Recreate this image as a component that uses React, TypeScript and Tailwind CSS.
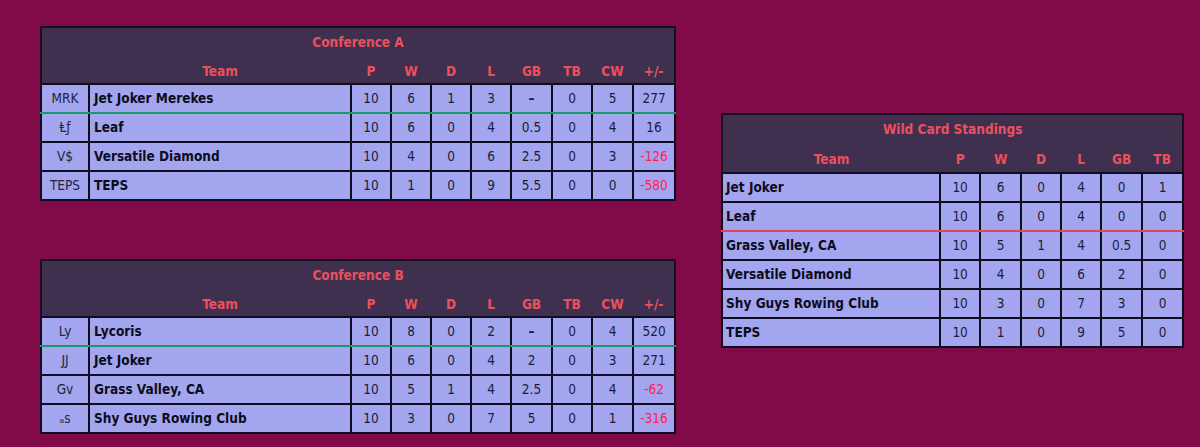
import React from 'react';

type Row = {
  code?: string;
  team: string;
  cells: string[];
};

const confA: Row[] = [
  { code: 'MRK', team: 'Jet Joker Merekes', cells: ['10', '6', '1', '3', '-', '0', '5', '277'] },
  { code: 'Ⱡƒ', team: 'Leaf', cells: ['10', '6', '0', '4', '0.5', '0', '4', '16'] },
  { code: 'V$', team: 'Versatile Diamond', cells: ['10', '4', '0', '6', '2.5', '0', '3', '-126'] },
  { code: 'TEPS', team: 'TEPS', cells: ['10', '1', '0', '9', '5.5', '0', '0', '-580'] },
];

const confB: Row[] = [
  { code: 'Ly', team: 'Lycoris', cells: ['10', '8', '0', '2', '-', '0', '4', '520'] },
  { code: 'JJ', team: 'Jet Joker', cells: ['10', '6', '0', '4', '2', '0', '3', '271'] },
  { code: 'Gv', team: 'Grass Valley, CA', cells: ['10', '5', '1', '4', '2.5', '0', '4', '-62'] },
  { code: 'ₐs', team: 'Shy Guys Rowing Club', cells: ['10', '3', '0', '7', '5', '0', '1', '-316'] },
];

const wildCard: Row[] = [
  { team: 'Jet Joker', cells: ['10', '6', '0', '4', '0', '1'] },
  { team: 'Leaf', cells: ['10', '6', '0', '4', '0', '0'] },
  { team: 'Grass Valley, CA', cells: ['10', '5', '1', '4', '0.5', '0'] },
  { team: 'Versatile Diamond', cells: ['10', '4', '0', '6', '2', '0'] },
  { team: 'Shy Guys Rowing Club', cells: ['10', '3', '0', '7', '3', '0'] },
  { team: 'TEPS', cells: ['10', '1', '0', '9', '5', '0'] },
];

const confCols = ['P', 'W', 'D', 'L', 'GB', 'TB', 'CW', '+/-'];
const confWidths = ['w-[40px]', 'w-[40px]', 'w-[40px]', 'w-[40px]', 'w-[41px]', 'w-[40px]', 'w-[41px]', 'w-[42px]'];
const wcCols = ['P', 'W', 'D', 'L', 'GB', 'TB'];
const wcWidths = ['w-[40px]', 'w-[41px]', 'w-[40px]', 'w-[40px]', 'w-[41px]', 'w-[41px]'];

const cell = 'border-2 border-[#0e0c1e] bg-[#a3a6ee] h-[29px] p-0 text-[13.5px]';
const head = 'text-[13.5px] font-bold text-[#ee4f5c] text-center';

const ConferenceTable: React.FC<{ title: string; rows: Row[] }> = ({ title, rows }) => (
  <table className="table-fixed border-collapse border-2 border-[#15101f] w-[636px]">
    <colgroup>
      <col className="w-[48px]" />
      <col className="w-[262px]" />
      {confWidths.map((w, i) => (
        <col key={i} className={w} />
      ))}
    </colgroup>
    <thead>
      <tr className="bg-[#40304f]">
        <th colSpan={10} className={`${head} h-[29px]`}>
          {title}
        </th>
      </tr>
      <tr className="bg-[#40304f]">
        <th className="h-[28px]" />
        <th className={`${head} pt-[3px]`}>Team</th>
        {confCols.map((c) => (
          <th key={c} className={`${head} pt-[3px]`}>
            {c}
          </th>
        ))}
      </tr>
    </thead>
    <tbody>
      {rows.map((r, ri) => {
        const edge = ri === 0 ? 'border-b-[#1a9a6c]' : '';
        return (
          <tr key={r.team}>
            <td className={`${cell} ${edge} text-center text-[#24243c]`}>{r.code}</td>
            <td className={`${cell} ${edge} pl-[4px] font-bold text-[#0c0c1c]`}>{r.team}</td>
            {r.cells.map((v, i) => {
              const neg = v.startsWith('-') && v.length > 1;
              return (
                <td
                  key={i}
                  className={`${cell} ${edge} text-center ${neg ? 'text-[#ff1f4f]' : 'text-[#1c1c3a]'} ${
                    v === '-' ? 'font-bold' : ''
                  }`}
                >
                  {v === '-' ? '–' : v}
                </td>
              );
            })}
          </tr>
        );
      })}
    </tbody>
  </table>
);

const WildCardTable: React.FC = () => (
  <table className="table-fixed border-collapse border-2 border-[#15101f] w-[461px]">
    <colgroup>
      <col className="w-[218px]" />
      {wcWidths.map((w, i) => (
        <col key={i} className={w} />
      ))}
    </colgroup>
    <thead>
      <tr className="bg-[#40304f]">
        <th colSpan={7} className={`${head} h-[30px]`}>
          Wild Card Standings
        </th>
      </tr>
      <tr className="bg-[#40304f]">
        <th className={`${head} h-[29px] pt-[2px]`}>Team</th>
        {wcCols.map((c) => (
          <th key={c} className={`${head} pt-[2px]`}>
            {c}
          </th>
        ))}
      </tr>
    </thead>
    <tbody>
      {wildCard.map((r, ri) => {
        const edge = ri === 1 ? 'border-b-[#e2405e]' : '';
        return (
          <tr key={r.team}>
            <td className={`${cell} ${edge} pl-[3px] font-bold text-[#0c0c1c]`}>{r.team}</td>
            {r.cells.map((v, i) => (
              <td key={i} className={`${cell} ${edge} text-center text-[#1c1c3a]`}>
                {v}
              </td>
            ))}
          </tr>
        );
      })}
    </tbody>
  </table>
);

export default function App() {
  return (
    <div
      className="w-[1200px] h-[447px] bg-[#800a4a] flex items-start gap-[45px] pl-[40px] pt-[26px] overflow-hidden"
      style={{ fontFamily: '"DejaVu Sans Condensed", "Liberation Sans", sans-serif' }}
    >
      <div className="flex flex-col gap-[58px]">
        <ConferenceTable title="Conference A" rows={confA} />
        <ConferenceTable title="Conference B" rows={confB} />
      </div>
      <div className="mt-[87px]">
        <WildCardTable />
      </div>
    </div>
  );
}
